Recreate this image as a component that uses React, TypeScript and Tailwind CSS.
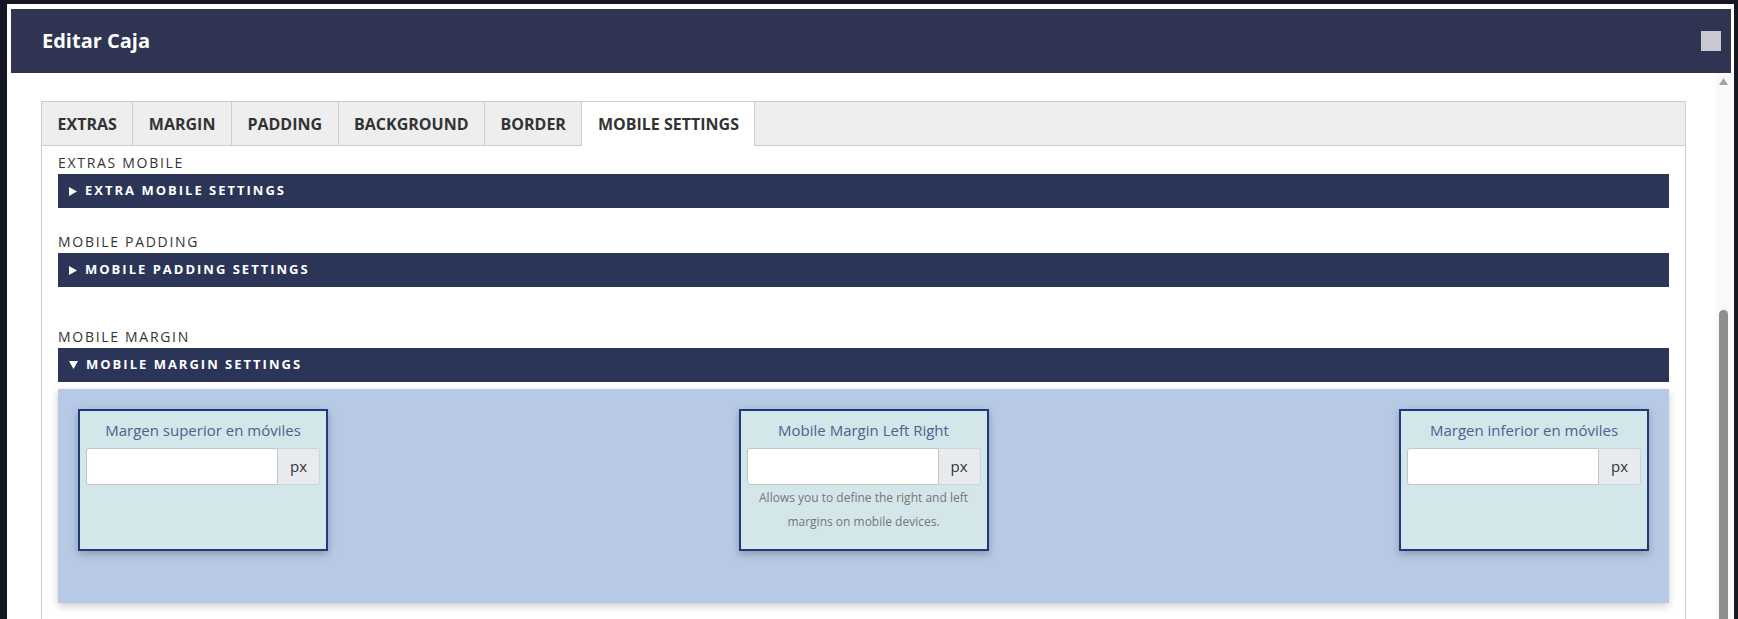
import React from 'react';

const font = { fontFamily: '"Open Sans", "Liberation Sans", sans-serif' };

const tabs = ['EXTRAS', 'MARGIN', 'PADDING', 'BACKGROUND', 'BORDER', 'MOBILE SETTINGS'];

function Caret({ open }: { open?: boolean }) {
  if (open) {
    return (
      <svg width="9" height="8" viewBox="0 0 9 8" className="shrink-0">
        <path d="M0 0 H9 L4.5 8 Z" fill="#fff" />
      </svg>
    );
  }
  return (
    <svg width="8" height="9" viewBox="0 0 8 9" className="shrink-0">
      <path d="M0 0 L8 4.5 L0 9 Z" fill="#fff" />
    </svg>
  );
}

function Section({ label, title, open, className }: { label: string; title: string; open?: boolean; className?: string }) {
  return (
    <div className={className}>
      <div className="text-[14px] leading-[20px] tracking-[1.7px] text-[#333] mb-[1px]">{label}</div>
      <div className="h-[34px] bg-[#2a3558] flex items-center gap-[8px] pl-[11px]">
        <Caret open={open} />
        <span className="text-white text-[13px] font-bold tracking-[2px]">{title}</span>
      </div>
    </div>
  );
}

function MarginCard({ label, help }: { label: string; help?: string }) {
  return (
    <div className="w-[250px] h-[142px] bg-[#d3e6ea] border-2 border-[#1d3b7a] shadow-[0_3px_8px_rgba(0,0,0,0.25)] px-[6px] pt-[8px]">
      <div className="text-center text-[15px] leading-[22px] text-[#4f6190]">{label}</div>
      <div className="flex mt-[7px] h-[37px]">
        <input
          type="text"
          className="flex-1 min-w-0 bg-white border border-[#c4c4c4] rounded-l-[3px] outline-none px-2"
        />
        <div className="w-[42px] bg-[#e8ebee] border border-l-0 border-[#d0d4d8] rounded-r-[3px] flex items-center justify-center text-[15px] text-[#333]">
          px
        </div>
      </div>
      {help && (
        <p className="text-center text-[12px] leading-[24px] text-[#777] mt-[1px]">{help}</p>
      )}
    </div>
  );
}

export default function App() {
  return (
    <div className="h-[619px] w-full overflow-hidden bg-[#141824] pl-[7px] pt-[4px] pr-[4px]" style={font}>
      <div className="h-full bg-white flex flex-col">
        <div className="ml-[4px] mr-[3px] mt-[5px] h-[64px] bg-[#2e3451] flex items-center justify-between pl-[31px] pr-[10px] shrink-0">
          <h1 className="text-white text-[20px] font-bold">Editar Caja</h1>
          <div className="w-[20px] h-[20px] bg-[#c9cad1]" />
        </div>

        <div className="flex flex-1 min-h-0 ml-[4px] mr-[1px]">
          <div className="flex-1 px-[30px] pt-[28px] overflow-hidden">
            <div className="border border-[#cccccc] border-b-0 h-[600px]">
              <div className="flex h-[44px] bg-[#eeeeee]">
                {tabs.map((t, i) => {
                  const active = i === tabs.length - 1;
                  return (
                    <div
                      key={t}
                      className={
                        active
                          ? 'px-[15.5px] flex items-center border-r border-[#cccccc] bg-white text-[16px] font-bold text-[#333]'
                          : 'px-[15.5px] flex items-center border-r border-b border-[#cccccc] text-[16px] font-bold text-[#333]'
                      }
                    >
                      {t}
                    </div>
                  );
                })}
                <div className="flex-1 border-b border-[#cccccc]" />
              </div>

              <div className="px-4 pt-[7px]">
                <Section label="EXTRAS MOBILE" title="EXTRA MOBILE SETTINGS" />
                <Section label="MOBILE PADDING" title="MOBILE PADDING SETTINGS" className="mt-[24px]" />
                <Section label="MOBILE MARGIN" title="MOBILE MARGIN SETTINGS" open className="mt-[40px]" />

                <div className="mt-[7px] h-[214px] bg-[#b8c9e6] shadow-[0_3px_8px_rgba(0,0,0,0.2)] p-[20px] flex justify-between items-start">
                  <MarginCard label="Margen superior en móviles" />
                  <MarginCard
                    label="Mobile Margin Left Right"
                    help="Allows you to define the right and left margins on mobile devices."
                  />
                  <MarginCard label="Margen inferior en móviles" />
                </div>
              </div>
            </div>
          </div>

          <div className="w-[17px] bg-[#f9f9f9] relative shrink-0">
            <svg width="9" height="7" viewBox="0 0 9 7" className="absolute left-[3px] top-[5px]">
              <path d="M0 7 L4.5 0 L9 7 Z" fill="#a3a3a3" />
            </svg>
            <div className="absolute left-[3px] w-[9px] top-[237px] bottom-0 bg-[#8e8e8e] rounded-t-[5px]" />
          </div>
        </div>
      </div>
    </div>
  );
}
